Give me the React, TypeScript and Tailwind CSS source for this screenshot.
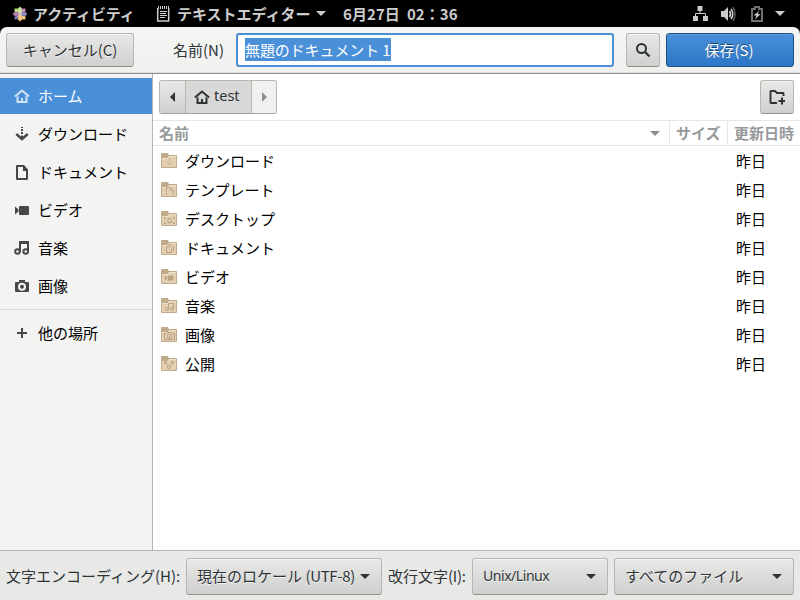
import type { ReactNode } from 'react';
import clsx from 'clsx';

const jp = "font-['Noto_Sans_CJK_JP',sans-serif]";
const raised =
  'border border-[#b6b6b3] border-b-[#91918c] rounded-[3px] bg-linear-to-b from-[#e8e8e7] to-[#d0d0ce] shadow-[inset_0_1px_#f6f6f5] text-[#2e3436] [text-shadow:0_1px_#ffffffc4]';

function Icon({ children, className }: { children: ReactNode; className?: string }) {
  return (
    <svg viewBox="0 0 16 16" className={clsx('w-4 h-4 shrink-0', className)} fill="currentColor">
      {children}
    </svg>
  );
}

const home = (
  <>
    <path d="M.9 8.6 8 2.5l7.1 6.1" fill="none" stroke="currentColor" strokeWidth="2" />
    <path d="M2.5 9 4.5 7.5V13H7v-3h2v3h2.5V7.5l2 1.5v6h-11z" />
  </>
);
const download = (
  <>
    <path d="M7 1h2v1H7zM7 3h2v2H7zM7 6h2v2H7z" />
    <path d="m2.3 8 5.7 5.2L13.700 8" fill="none" stroke="currentColor" strokeWidth="2.4" />
    <path d="M7 9.500h2V13H7z" />
  </>
);
const documentIcon = (
  <path d="M2 2q0-1 1-1h7l4 4.500V15q0 1-1 1H3q-1 0-1-1zM4 3v11h8V7H9V3z" fillRule="evenodd" />
);
const video = (
  <>
    <rect x="5" y="4" width="10" height="9" rx="1" />
    <path d="M1 4.500v8l3.500-3v-2z" />
  </>
);
const music = (
  <>
    <path d="M5 1h10v11h-2V4H7v8H5z" />
    <circle cx="3.500" cy="11.500" r="2.300" fill="none" stroke="currentColor" strokeWidth="1.900" />
    <circle cx="11.700" cy="11.500" r="2.300" fill="none" stroke="currentColor" strokeWidth="1.900" />
  </>
);
const camera = (
  <path
    d="M5 2h6v2h3a1 1 0 0 1 1 1v8a1 1 0 0 1-1 1H2a1 1 0 0 1-1-1V5a1 1 0 0 1 1-1h3zM8 4.700a4 4 0 1 0 0 8 4 4 0 0 0 0-8zM8 6.700a2 2 0 1 1 0 4 2 2 0 0 1 0-4z"
    fillRule="evenodd"
  />
);
const plus = <path d="M7 3h2v4h4v2H9v4H7V9H3V7h4z" />;

const places = [
  { label: 'ホーム', icon: home },
  { label: 'ダウンロード', icon: download },
  { label: 'ドキュメント', icon: documentIcon },
  { label: 'ビデオ', icon: video },
  { label: '音楽', icon: music },
  { label: '画像', icon: camera },
];

const line = { fill: 'none', stroke: '#bba27e', strokeWidth: 1 };

const folders = [
  { name: 'ダウンロード', emblem: <path d="M8.500 5.500v1M8.500 7.500v1M6 9l2.500 2.500L11 9" {...line} /> },
  { name: 'テンプレート', emblem: <path d="M5.500 13V5.500h4l2.500 2.500v5M9.500 6v2.500H12" {...line} strokeDasharray="2 .7" /> },
  {
    name: 'デスクトップ',
    emblem: (
      <>
        <path d="M3.500 8V6.500H5M12 6.500h1.500V8M3.500 11v1.500H5M12 12.500h1.500V11" {...line} />
        <path d="M7 7.500h2l1.500 1v3H7z" {...line} />
      </>
    ),
  },
  { name: 'ドキュメント', emblem: <path d="M7.500 4.500h3l2 2v5M5.500 6.500h3l2 2v4h-5z" {...line} /> },
  { name: 'ビデオ', emblem: <path d="M7 6.500h5.500v5H7zM4 6.500v5L6.500 9.500v-1z" fill="#bba27e" /> },
  {
    name: '音楽',
    emblem: (
      <>
        <path d="M7.500 10.500v-5h5v5" {...line} />
        <circle cx="6" cy="11" r="1.500" {...line} />
        <circle cx="11" cy="11" r="1.500" {...line} />
      </>
    ),
  },
  {
    name: '画像',
    emblem: (
      <>
        <path d="M3.500 6.500h2l1-1h4l1 1h2v6h-10z" {...line} />
        <circle cx="8.500" cy="9.500" r="2.300" {...line} />
        <circle cx="8.500" cy="9.500" r=".7" fill="#bba27e" />
      </>
    ),
  },
  {
    name: '公開',
    emblem: (
      <>
        <circle cx="8" cy="11" r="1.600" {...line} />
        <path d="M3.500 5.500h2v2h-2zM10.500 5.500h2v2h-2zM5 7.500 6.500 9M11 7.500 9.500 9" {...line} strokeWidth=".9" />
      </>
    ),
  },
];

function Folder({ children }: { children: ReactNode }) {
  return (
    <svg viewBox="0 0 16 16" className="w-4 h-4 shrink-0">
      <path d="M0 14V1Q0 0 1 0h5.500q1 0 1 1v1H15q1 0 1 1v11q0 1-1 1H1q-1 0-1-1z" fill="#c0ab89" />
      <path d="M1 5h5.500L8 3h7v11H1z" fill="#e3cfb4" />
      <path d="M1 5.500h5.700L8.200 3.500H15" fill="none" stroke="#f0e4d3" strokeWidth=".8" />
      {children}
    </svg>
  );
}

function Caret({ className }: { className?: string }) {
  return (
    <svg viewBox="0 0 10 5" className={clsx('w-[10px] h-[5px] shrink-0', className)}>
      <path d="M0 0h10L5 5z" fill="currentColor" />
    </svg>
  );
}

function CentosLogo() {
  return (
    <svg viewBox="0 0 16 16" className="w-4 h-4 shrink-0">
      <path d="M2.500 2.500h5v5h-5z" fill="#b5d46a" />
      <path d="M8.500 2.500h5v5h-5z" fill="#b77aae" />
      <path d="M2.500 8.500h5v5h-5z" fill="#5b5c9f" />
      <path d="M8.500 8.500h5v5h-5z" fill="#f0b860" />
      <path d="m8 .5 2 2v3.500L8 8 6 6V2.500z" fill="#c6de8c" />
      <path d="m15.500 8-2 2H10L8 8l2-2h3.500z" fill="#7675ad" />
      <path d="m8 15.500-2-2V10l2-2 2 2v3.500z" fill="#f2bd68" />
      <path d="m.5 8 2-2H6l2 2-2 2H2.500z" fill="#a565a0" />
      <path d="M8 2v12M2 8h12M3 3l10 10M13 3 3 13" stroke="#e4dfe0" strokeWidth=".6" />
    </svg>
  );
}

function TopBar() {
  return (
    <div className="flex h-[27px] shrink-0 items-center bg-black pl-3 pr-[15px] text-[15px] leading-[27px] font-bold text-[#ccc]">
      <CentosLogo />
      <span className="ml-[5px] w-[101px] whitespace-nowrap tracking-[-0.1px]">アクティビティ</span>
      <svg viewBox="0 0 14 16" className="ml-[22px] h-4 w-[14px] shrink-0">
        <path d="M1.700 2v13h11V2" fill="none" stroke="#ccc" strokeWidth="1.500" />
        <path d="M2.500 0v3M4.500 0v3M6.500 0v3M8.500 0v3M10.500 0v3M12.500 0v3" stroke="#ccc" />
        <path d="M4 5.500h7M4 7.500h6M4 9.500h7M4 11.500h5" stroke="#ccc" />
      </svg>
      <span className="ml-[7px] w-[135px] whitespace-nowrap">テキストエディター</span>
      <Caret className="ml-1" />
      <span className="ml-[17px] whitespace-pre tracking-[0.08px]">6月27日  02：36</span>
      <div className="ml-auto flex items-center">
        <Icon>
          <path d="M5.500 0h5v5h-5zM1 10h5v5H1zM11 10h5v5h-5z" />
          <path d="M8 5v3M3.500 11V7.500h10V11" fill="none" stroke="#ccc" />
        </Icon>
        <Icon className="ml-3">
          <path d="M1 5h3l4-4v14l-4-4H1z" />
          <path d="M9.500 5q2 3 0 6" fill="none" stroke="#ccc" strokeWidth="1.600" />
          <path d="M11 3q3.500 5 0 10" fill="none" stroke="#ccc" strokeWidth="1.600" />
          <path d="M13 1q4 7 0 14" fill="none" stroke="#555" strokeWidth="1.600" />
        </Icon>
        <Icon className="ml-[13px]">
          <path d="M3 3h3V1h4v2h3v12H3z" fill="none" stroke="#707070" strokeWidth="2" />
          <path d="M10.500 4.500 4.500 9.500h3L6 13.500l5.500-5.500h-3z" />
        </Icon>
        <Caret className="ml-[10px]" />
      </div>
    </div>
  );
}

function HeaderBar() {
  return (
    <div className="bg-black">
      <div className="flex h-[47px] items-center rounded-t-[7px] border-b border-[#91918c] bg-linear-to-b from-[#f5f5f4] to-[#f0f0ef] px-1.5 shadow-[inset_0_-1px_#dededc]">
        <button className={clsx(raised, 'h-[34px] w-32 text-[15px] leading-8')}>キャンセル(C)</button>
        <span className="ml-[39px] w-[63px] whitespace-nowrap text-[15px] text-[#2e3436]">名前(N)</span>
        <div className="flex h-[34px] w-[378px] items-start rounded-[3px] border-2 border-[#4a90d9] bg-white px-[7px] pt-[3px]">
          <span className="h-[23px] whitespace-nowrap bg-[#4a90d9] text-[15px] leading-[23px] tracking-[-0.1px] text-white">
            無題のドキュメント 1
          </span>
        </div>
        <button className={clsx(raised, 'ml-3 flex size-[34px] items-center justify-center')}>
          <Icon>
            <circle cx="6.500" cy="6.500" r="4.500" fill="none" stroke="currentColor" strokeWidth="2" />
            <path d="m10 10 4.500 4.500" stroke="currentColor" strokeWidth="2.400" />
          </Icon>
        </button>
        <button className="ml-1.5 h-[34px] w-32 rounded-[3px] border border-[#1c5187] bg-linear-to-b from-[#4a90d9] to-[#2a76c6] pr-[2px] text-[15px] leading-8 text-white shadow-[inset_0_1px_#5f9ddd] [text-shadow:0_-1px_#184472]">
          保存(S)
        </button>
      </div>
    </div>
  );
}

function Sidebar() {
  return (
    <div className="w-[153px] shrink-0 border-r border-[#b6b6b3] bg-[#f3f3f2] pt-1 text-[15px]">
      <div className="flex flex-col gap-0.5">
        {places.map((p, i) => (
          <div
            key={p.label}
            className={clsx('flex h-9 items-center gap-2 pl-[14px]', i === 0 ? 'bg-[#4a90d9] text-white' : 'text-black')}
          >
            <Icon className={i === 0 ? 'text-[#d2e3f6]' : 'text-[#474747]'}>{p.icon}</Icon>
            <span>{p.label}</span>
          </div>
        ))}
      </div>
      <div className="mt-[5px] h-px bg-[#d8d8d6]" />
      <div className="mt-[5px] flex h-9 items-center gap-2 pl-[14px]">
        <Icon className="text-[#474747]">{plus}</Icon>
        <span>他の場所</span>
      </div>
    </div>
  );
}

function FileList() {
  return (
    <div className="flex-1 bg-white">
      <div className="flex h-[46px] items-center justify-between px-1.5">
        <div className="flex h-[34px] overflow-hidden rounded-[3px] border border-[#b6b6b3] border-b-[#a3a39f] text-[#2e3436]">
          <div className="flex w-[26px] items-center justify-center border-r border-[#b6b6b3] bg-linear-to-b from-[#e8e8e7] to-[#d0d0ce] pr-px">
            <svg viewBox="0 0 5 10" className="h-[10px] w-[5px]">
              <path d="M5 0v10L0 5z" fill="currentColor" />
            </svg>
          </div>
          <div className="flex w-[66px] items-center border-r border-[#b6b6b3] bg-[#d8d8d6] pl-2">
            <Icon>{home}</Icon>
            <span className="ml-1 pb-0.5 font-['Noto_Sans',sans-serif] text-[14.5px]">test</span>
          </div>
          <div className="flex w-6 items-center justify-center bg-[#f1f1f0] text-[#8b8e8f]">
            <svg viewBox="0 0 5 10" className="h-[10px] w-[5px]">
              <path d="M0 0v10l5-5z" fill="currentColor" />
            </svg>
          </div>
        </div>
        <button className={clsx(raised, 'flex size-[34px] items-center justify-center')}>
          <Icon>
            <path d="M8 14H2q-.5 0-.5-.5V2.500Q1.500 2 2 2h4l2 2h6q.5 0 .5.5V7" fill="none" stroke="currentColor" strokeWidth="1.900" />
            <path d="M12 8.500h2V11h2.500v2H14v2.500h-2V13H9.500v-2H12z" />
          </Icon>
        </button>
      </div>
      <div className="flex h-[26px] border-y border-[#e6e6e6] text-[15px] leading-6 font-bold text-[#979a9b]">
        <div className="flex w-[517px] items-center justify-between border-r border-[#e6e6e6] pl-1.5 pr-[9px]">
          名前
          <Caret className="text-[#8b8e8f]" />
        </div>
        <div className="w-[58px] border-r border-[#e6e6e6] pl-1.5 whitespace-nowrap">サイズ</div>
        <div className="pl-1.5 whitespace-nowrap">更新日時</div>
      </div>
      {folders.map((f) => (
        <div key={f.name} className="flex h-[29px] items-center pl-2 text-[15px] text-black">
          <Folder>{f.emblem}</Folder>
          <span className="ml-2 flex-1 pt-0.5">{f.name}</span>
          <span className="w-16 pt-0.5">昨日</span>
        </div>
      ))}
    </div>
  );
}

function Combo({ label, className }: { label: ReactNode; className: string }) {
  return (
    <button className={clsx(raised, 'flex h-[37px] shrink-0 items-center justify-between pl-[10px] pr-[11px] whitespace-nowrap', className)}>
      <span>{label}</span>
      <Caret />
    </button>
  );
}

function Footer() {
  return (
    <div className="flex h-[50px] shrink-0 items-center border-t border-[#b6b6b3] bg-[#e8e8e7] px-1.5 pt-0.5 text-[15px] text-[#2e3436]">
      <span className="w-[180px] whitespace-nowrap">文字エンコーディング(H):</span>
      <Combo
        label={
          <>
            現在のロケール <span className="tracking-[-0.3px]">(UTF-8)</span>
          </>
        }
        className="w-[196px]"
      />
      <span className="ml-1.5 w-[84px] whitespace-nowrap">
        改行文字<span className="tracking-[-0.3px]">(I):</span>
      </span>
      <Combo
        label={<span className="relative -top-px">Unix/Linux</span>}
        className="w-[136px] font-['Noto_Sans',sans-serif] text-[14px] tracking-[-0.45px]"
      />
      <Combo label="すべてのファイル" className="ml-1.5 w-[180px]" />
    </div>
  );
}

export default function App() {
  return (
    <div className={clsx(jp, 'flex h-[600px] w-[800px] flex-col overflow-hidden')}>
      <TopBar />
      <HeaderBar />
      <div className="flex flex-1">
        <Sidebar />
        <FileList />
      </div>
      <Footer />
    </div>
  );
}
